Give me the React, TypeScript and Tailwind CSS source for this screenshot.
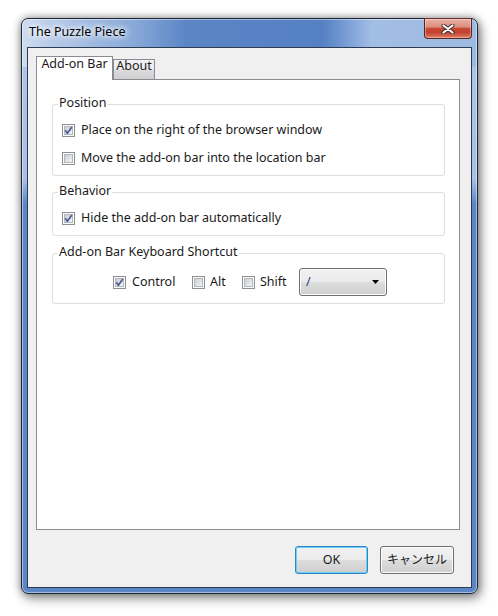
import React from "react";

function Check({ checked }: { checked?: boolean }) {
  return (
    <svg width="13" height="13" viewBox="0 0 13 13" className="block shrink-0">
      <defs>
        <linearGradient id="cbfill" x1="0" y1="0" x2="1" y2="1">
          <stop offset="0" stopColor="#c7cbd1" />
          <stop offset="1" stopColor="#f7f7f7" />
        </linearGradient>
      </defs>
      <rect x="0.5" y="0.5" width="12" height="12" fill="#fbfbfb" stroke="#8e8f8f" />
      <rect x="2.5" y="2.5" width="8" height="8" fill="url(#cbfill)" stroke="#b3b8be" />
      {checked && (
        <path
          d="M3.3 6.3 L5.4 9.3 L9.8 2.9"
          fill="none"
          stroke="#4a5d96"
          strokeWidth="1.7"
          strokeLinejoin="round"
        />
      )}
    </svg>
  );
}

function Row({ checked, label }: { checked?: boolean; label: string }) {
  return (
    <div className="flex items-center h-[16px]">
      <Check checked={checked} />
      <span className="ml-[6px]">{label}</span>
    </div>
  );
}

function Legend({ children }: { children: React.ReactNode }) {
  return <legend className="ml-[5px] px-[1px] leading-[14px] pb-[2px]">{children}</legend>;
}

export default function App() {
  return (
    <div className="w-[498px] h-[616px] bg-white pl-[21px] pt-[18px] font-['Noto_Sans','Noto_Sans_CJK_JP',sans-serif] text-[12.5px] leading-[16px] text-[#1a1a1a]">
      <div className="relative w-[457px] h-[576px] rounded-[7px] border border-[#1c2637] flex flex-col px-[5px] pb-[5px] shadow-[inset_0_0_0_1px_rgba(255,255,255,0.45),0_0_9px_rgba(0,0,0,0.45),3px_5px_12px_rgba(0,0,0,0.35)] bg-[linear-gradient(90deg,#cddcf0_0px,#b6cbe9_30px,#86a7d8_115px,#5b85c5_165px,#5580c2_300px,#7a9ed6_325px,#a3bee5_350px,#9dbae2_457px),linear-gradient(180deg,#b0c6e6_0px,#a8c0e4_160px,#5b87c8_185px,#5b87c8_100%)] [background-size:100%_48px,100%_100%] bg-no-repeat">
        {/* title bar */}
        <div className="h-[28px] flex items-center pl-[2px] pb-[2px] text-black [text-shadow:0_0_8px_#fff,0_0_8px_#fff,0_0_4px_#fff]">
          The Puzzle Piece
        </div>

        {/* close button */}
        <div className="absolute top-[-1px] right-[5px] w-[48px] h-[21px] rounded-b-[4px] border border-[#5a2420] border-t-[#6b2b26] flex items-center justify-center bg-[linear-gradient(#e9b0a4_0%,#dc8d7e_42%,#c64a35_50%,#c2412c_70%,#dc7d67_100%)] shadow-[inset_0_0_0_1px_rgba(255,255,255,0.35)]">
          <svg width="14" height="10" viewBox="0 0 14 10">
            <path d="M2.5 1.5 L11.5 8.5 M11.5 1.5 L2.5 8.5" stroke="#3a2a2a" strokeWidth="4" strokeLinecap="round" />
            <path d="M2.5 1.5 L11.5 8.5 M11.5 1.5 L2.5 8.5" stroke="#ffffff" strokeWidth="2.2" strokeLinecap="round" />
          </svg>
        </div>

        {/* client area */}
        <div className="h-[541px] border border-[#2e3c53] bg-[#f0f0f0] flex flex-col pl-[8px] pr-[11px] pt-[8px]">
          {/* tab strip */}
          <div className="flex items-end h-[24px]">
            <div className="relative z-10 w-[77px] h-[24px] border border-b-0 border-[#898c95] bg-white flex justify-center items-start leading-[14px]">
              Add-on Bar
            </div>
            <div className="w-[42px] h-[20px] mb-[1px] border border-b-0 border-[#898c95] flex justify-center items-start leading-[12px] bg-[linear-gradient(#f3f3f3_0%,#ebebeb_50%,#dddddd_51%,#cfcfcf_100%)]">
              About
            </div>
          </div>

          {/* tab panel */}
          <div className="mt-[-1px] h-[451px] border border-[#898c95] bg-white pt-[16px] pl-[15px] pr-[14px] flex flex-col">
            <fieldset className="border border-[#d5dfe5] rounded-[3px] min-w-0">
              <Legend>Position</Legend>
              <div className="pt-[10px] pb-[9px] pl-[9px] flex flex-col gap-[12px]">
                <Row checked label="Place on the right of the browser window" />
                <Row label="Move the add-on bar into the location bar" />
              </div>
            </fieldset>

            <fieldset className="mt-[8px] border border-[#d5dfe5] rounded-[3px] min-w-0">
              <Legend>Behavior</Legend>
              <div className="pt-[10px] pb-[9px] pl-[9px] flex flex-col">
                <Row checked label="Hide the add-on bar automatically" />
              </div>
            </fieldset>

            <fieldset className="mt-[9px] border border-[#d5dfe5] rounded-[3px] min-w-0">
              <Legend>Add-on Bar Keyboard Shortcut</Legend>
              <div className="pt-[7px] pb-[7px] pl-[60px] flex items-center h-[42px]">
                <Check checked />
                <span className="ml-[6px] w-[60px]">Control</span>
                <Check />
                <span className="ml-[5px] w-[32px]">Alt</span>
                <Check />
                <span className="ml-[5px] w-[39px]">Shift</span>
                <div className="w-[88px] h-[28px] rounded-[3px] border border-[#707070] flex items-center pl-[6px] pr-[6px] justify-between bg-[linear-gradient(#f2f2f2_0%,#ebebeb_50%,#dddddd_51%,#cfcfcf_100%)] shadow-[inset_0_0_0_1px_#fbfbfb]">
                  <span className="text-[#1d3a8a]">/</span>
                  <svg width="8" height="4" viewBox="0 0 8 4" className="block">
                    <path d="M0 0 H7 L3.5 4 Z" fill="#000" />
                  </svg>
                </div>
              </div>
            </fieldset>
          </div>

          {/* buttons */}
          <div className="mt-[16px] flex justify-end gap-[12px] pr-[6px]">
            <div className="w-[73px] h-[28px] rounded-[3px] border border-[#3583c5] flex items-center justify-center bg-[linear-gradient(#f2f2f2_0%,#ebebeb_50%,#dddddd_51%,#cfcfcf_100%)] shadow-[inset_0_0_0_1px_#63d2f8]">
              OK
            </div>
            <div className="w-[74px] h-[28px] rounded-[3px] border border-[#707070] flex items-center justify-center text-[12px] bg-[linear-gradient(#f2f2f2_0%,#ebebeb_50%,#dddddd_51%,#cfcfcf_100%)] shadow-[inset_0_0_0_1px_#fbfbfb]">
              キャンセル
            </div>
          </div>
        </div>
      </div>
    </div>
  );
}
